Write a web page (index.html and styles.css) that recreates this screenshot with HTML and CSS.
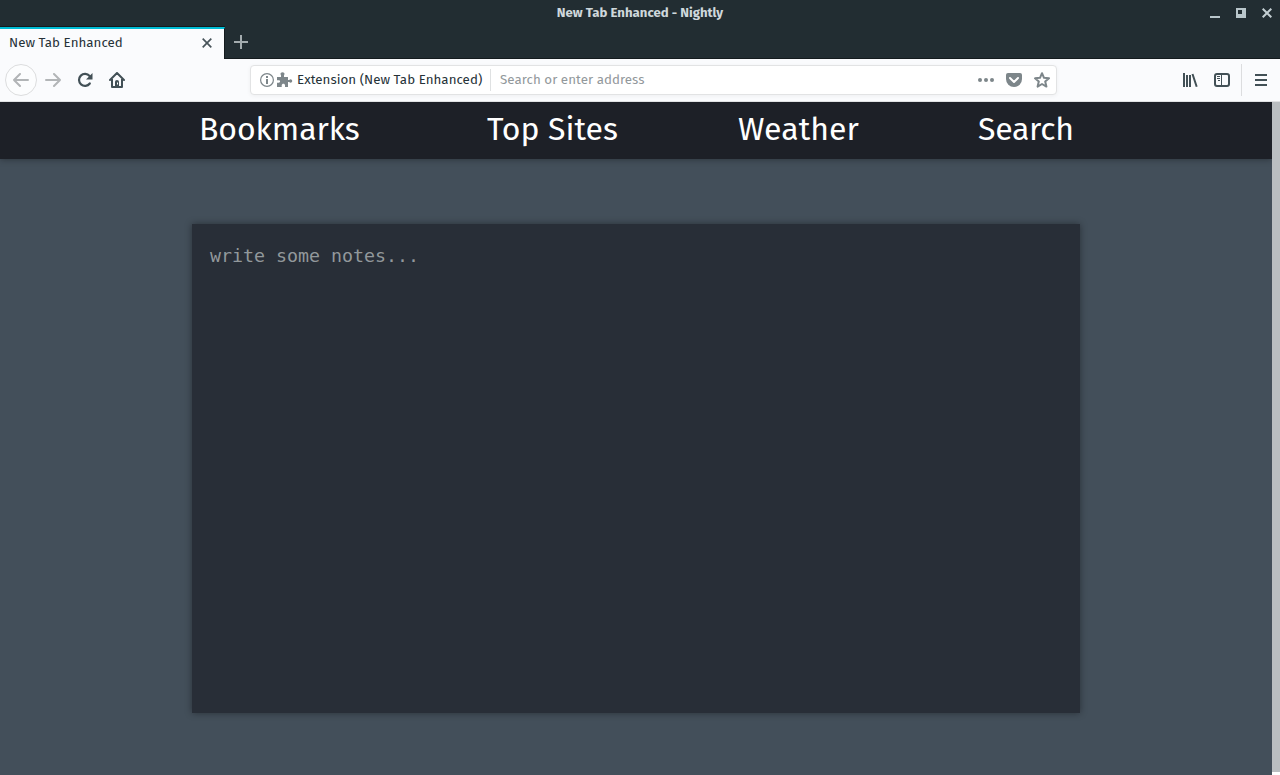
FILE: index.html
```html
<!DOCTYPE html>
<html lang="en">
<head>
<meta charset="utf-8">
<title>New Tab Enhanced - Nightly</title>
<link rel="stylesheet" href="styles.css">
</head>
<body>
<div class="window">
  <header class="titlebar">
    <span></span>
    <span class="window-title">New Tab Enhanced - Nightly</span>
    <div class="window-controls">
      <svg width="10" height="10"><path d="M0 8h10v2H0z" fill="#b9c6cb"/></svg>
      <svg width="10" height="10"><path fill-rule="evenodd" d="M0 0h10v10H0zM2 2v4h4V2z" fill="#b9c6cb"/></svg>
      <svg width="10" height="10"><path d="M.7.7l8.6 8.6M9.300.7L.7 9.300" stroke="#c3ced2" stroke-width="2"/></svg>
    </div>
  </header>
  <div class="tabs">
    <div class="tab">
      <span class="tab-label">New Tab Enhanced</span>
      <svg width="10" height="10"><path d="M.7.7l8.600 8.600M9.300.7L.7 9.300" stroke="#48545a" stroke-width="1.700"/></svg>
    </div>
    <svg class="new-tab" width="14" height="14"><path d="M7 0v14M0 7h14" stroke="#a3abae" stroke-width="2"/></svg>
  </div>
  <div class="toolbar">
    <div class="back"><svg width="16" height="14" fill="none" stroke="#b2b5b7" stroke-width="2" stroke-linecap="round" stroke-linejoin="round"><path d="M15 7H1M7 1L1 7l6 6"/></svg></div>
    <svg class="forward" width="16" height="14" fill="none" stroke="#b2b5b7" stroke-width="2" stroke-linecap="round" stroke-linejoin="round"><path d="M1 7h14M9 1l6 6-6 6"/></svg>
    <svg class="reload" width="16" height="16"><path d="M12.600 4A6 6 0 1 0 12.800 11.500" fill="none" stroke="#425056" stroke-width="2.200" stroke-linecap="round"/><path d="M15.500 1v6.500H9z" fill="#425056"/></svg>
    <svg class="home" width="16" height="16" fill="none" stroke="#425056" stroke-width="2" stroke-linecap="round" stroke-linejoin="round"><path d="M1 8l7-7 7 7M3 7v8h10V7"/><path d="M6 15V9.500Q6 8 8 8t2 1.500V15z" fill="#425056" stroke="none"/><path d="M8.500 10.500v2" stroke="#fff" stroke-width="1" stroke-linecap="butt"/></svg>
    <div class="urlbar">
      <svg width="14" height="14"><circle cx="7" cy="7" r="6.400" fill="none" stroke="#7d868a" stroke-width="1.200"/><path d="M6 3h2v2H6zM6 6h2v5H6z" fill="#7d868a"/></svg>
      <svg class="puzzle" width="16" height="16"><path fill="#7d868a" d="M0 5h4V3.200C3.700 2.800 3.500 2.400 3.500 2c0-1.100.8-1.800 2-1.800s2 .7 2 1.800c0 .4-.2.8-.5 1.200V5h4v3h1.200c.4-.5.8-.7 1.300-.7 1 0 1.700.7 1.700 1.700s-.7 1.700-1.700 1.700c-.5 0-.9-.2-1.300-.7H11v5H8v-1.800c0-.9-.7-1.500-1.600-1.500s-1.700.6-1.700 1.500V15H0v-4.300h1.700c.8 0 1.400-.5 1.400-1.200S2.500 8.300 1.700 8.300H0z"/></svg>
      <span class="origin">Extension (New Tab Enhanced)</span>
      <span class="hint">Search or enter address</span>
      <div class="page-actions">
        <svg width="16" height="16" fill="#7d868a"><circle cx="2" cy="8" r="2"/><circle cx="8" cy="8" r="2"/><circle cx="14" cy="8" r="2"/></svg>
        <svg width="16" height="16"><path d="M2 1h12q2 0 2 2v4a8 8 0 0 1-16 0V3q0-2 2-2z" fill="#7d868a"/><path d="M4 6l4 4 4-4" fill="none" stroke="#fff" stroke-width="2" stroke-linecap="round" stroke-linejoin="round"/></svg>
        <svg width="16" height="16"><path d="M8 1.200l2 4.600 5 .5-3.800 3.300 1.200 5L8 12l-4.400 2.600 1.200-5L1 6.300l5-.5z" fill="none" stroke="#7d868a" stroke-width="2" stroke-linejoin="round"/></svg>
      </div>
    </div>
    <div class="tools">
      <svg width="16" height="16"><path d="M2 1v14M5 3v12M8 3v12M10.500 2l4.200 12.700" fill="none" stroke="#425056" stroke-width="2"/></svg>
      <svg width="16" height="16"><rect x="1" y="2" width="14" height="12" rx="2" fill="none" stroke="#425056" stroke-width="2"/><path d="M7.500 2v12M3 4.500h3M3 6.500h3M4 8.500h2" fill="none" stroke="#425056"/></svg>
    </div>
    <div class="menu"><svg width="12" height="12"><path d="M0 1h12M0 6h12M0 11h12" stroke="#425056" stroke-width="2" fill="none"/></svg></div>
  </div>
  <div class="viewport">
    <main class="page">
      <nav class="nav">
        <a class="link bookmarks">Bookmarks</a>
        <a class="link top-sites">Top Sites</a>
        <a class="link weather">Weather</a>
        <a class="link search">Search</a>
      </nav>
      <div class="notes">write some notes...</div>
    </main>
    <div class="scrollbar"><div class="thumb"></div></div>
  </div>
</div>
</body>
</html>
```
FILE: styles.css
```css
* { box-sizing: border-box; }
body { margin: 0; overflow: hidden; font-family: "Fira Sans", "Noto Sans", sans-serif; font-size: 13.333px; letter-spacing: 0.030px; white-space: nowrap; }
svg { display: block; flex: none; }
.window { display: flex; flex-direction: column; width: 1280px; height: 775px; background: #fafbfd; }
.titlebar { display: grid; grid-template-columns: 1fr auto 1fr; align-items: center; height: 26px; background: #222d32; }
.window-title { padding-bottom: 1px; color: #cfd8dc; font-weight: 700; font-size: 13.200px; letter-spacing: 0; }
.window-controls { display: flex; justify-content: flex-end; gap: 16px; padding-right: 8px; }
.tabs { display: flex; height: 33px; background: #222d32; border-bottom: 1px solid #141b1e; }
.tab { display: flex; align-items: center; justify-content: space-between; width: 225px; height: 32px; padding: 0 12px 2px 9px; background: #fafbfd; border-top: 2px solid #00bcd4; border-right: 1px solid #141b1e; box-shadow: 0 -1px #141b1e, -1px 1px #fafbfd; margin-top: 1px; }
.tab-label { padding-bottom: 1px; color: #263238; }
.new-tab { margin: 9px 0 0 9px; }
.toolbar { display: flex; align-items: center; height: 43px; padding: 0 0 1px 5px; background: #fafbfd; border-bottom: 1px solid #e0e1e3; }
.back { display: grid; place-items: center; width: 32px; height: 32px; border: 1px solid #dcddde; border-radius: 50%; background: #fcfdfe; }
.forward { margin-left: 8px; }
.reload { margin-left: 16px; }
.home { margin-left: 16px; }
.urlbar { display: flex; align-items: center; width: 807px; height: 30px; margin-left: 125px; padding: 0 6px 0 9px; border: 1px solid #e2e3e4; border-radius: 4px; background: #fff; box-shadow: 0 1px 4px rgba(0,0,0,.05); }
.puzzle { margin-left: 3px; }
.origin { width: 194px; height: 22px; line-height: 22px; margin-left: 4px; border-right: 1px solid #dfe1e2; color: #263238; }
.hint { margin-left: 9px; color: #92989b; }
.page-actions { display: flex; gap: 12px; margin-left: auto; }
.tools { display: flex; gap: 16px; margin-left: 125px; }
.menu { display: flex; align-items: center; height: 32px; margin-left: 11px; padding-left: 13px; border-left: 1px solid #dcdddf; }
.viewport { display: flex; flex: 1; min-height: 0; overflow: hidden; }
.page { width: 1272px; background: #434f5a; overflow: hidden; }
.nav { display: flex; gap: 120px; height: 57px; padding-left: 200px; background: #1d2027; box-shadow: 0 0 7px rgba(0,0,0,.4); }
.link { color: #fff; font-size: 32px; line-height: 54px; letter-spacing: 0; }
.bookmarks { width: 167px; text-indent: -1px; letter-spacing: -.1px; }
.top-sites { width: 131px; }
.weather { width: 120px; }
.search { width: 95px; letter-spacing: -.3px; }
.notes { width: 888px; height: 489px; margin: 65px 0 0 192px; padding: 21px 18px; background: #282e37; box-shadow: 0 0 7px rgba(0,0,0,.4); color: #92989b; font: 18.300px/22px "DejaVu Sans Mono", monospace; letter-spacing: 0; }
.scrollbar { width: 8px; background: #fff; }
.thumb { height: 670px; background: #babec1; }
```
